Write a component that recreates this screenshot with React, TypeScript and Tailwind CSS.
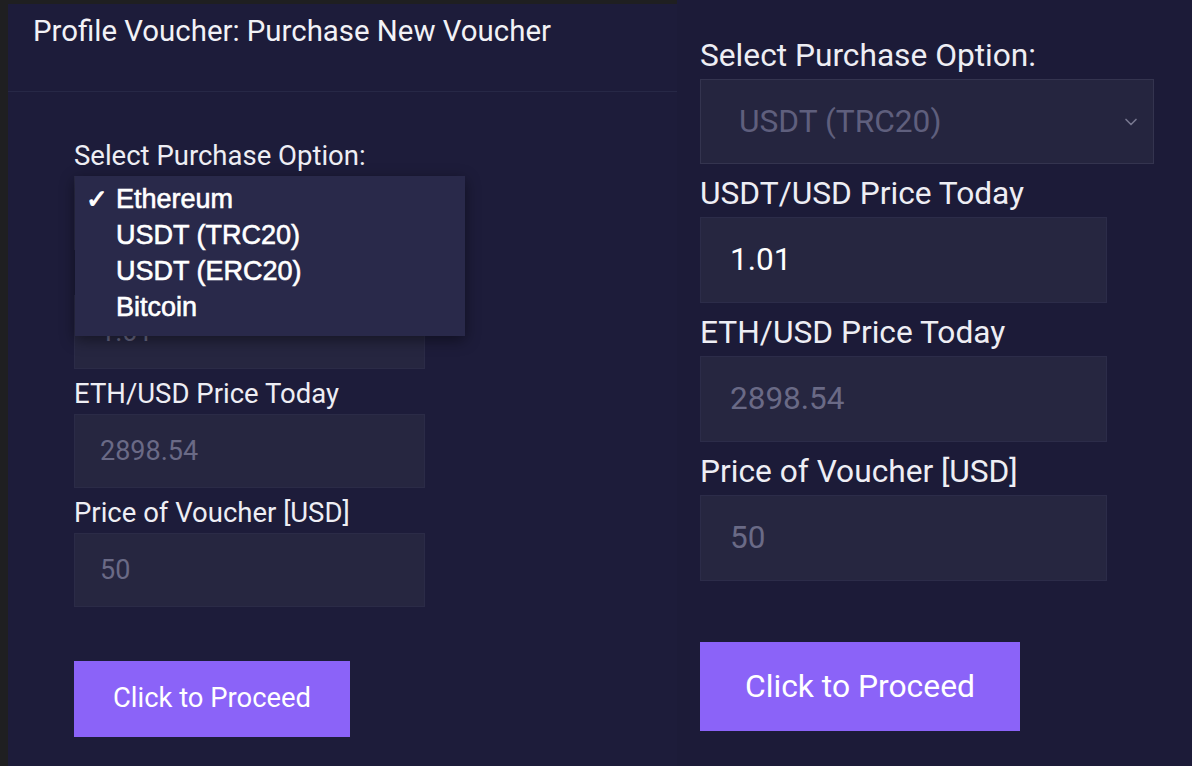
import React from "react";
import { ChevronDown } from "lucide-react";

const font = { roboto: "font-['Roboto',sans-serif]" };

const options = ["Ethereum", "USDT (TRC20)", "USDT (ERC20)", "Bitcoin"];

// left panel: the native select is open, its option list lies over the form
const OptionList = ({ selected }: { selected: string }) => (
  <ul className="absolute left-px top-0 w-[390px] pt-[5px] pb-[11px] bg-[#29294a] shadow-[0_4px_14px_rgba(0,0,0,0.45)] font-['Liberation_Sans',Arial,sans-serif] text-[27px] text-white [-webkit-text-stroke:0.6px_white] z-10">
    {options.map((o) => (
      <li key={o} className="flex items-center h-[36px] pl-[11px]">
        <span className="w-[30px] text-[26px] [-webkit-text-stroke:1px_white]">{o === selected ? "✓" : ""}</span>
        {o}
      </li>
    ))}
  </ul>
);

const LeftField = ({ label, value }: { label: string; value: string }) => (
  <div className="flex flex-col">
    <label className="mt-[10px] mb-[5px] h-[30px] leading-[30px] text-[27.5px] text-[#eeeef4]">{label}</label>
    <div className="w-[351px] h-[74px] bg-[#262640] border border-[#2b2b47] flex items-center pl-[25px] text-[27px] text-[#6a6a86]">
      {value}
    </div>
  </div>
);

const RightField = ({ label, value, light }: { label: string; value: string; light?: boolean }) => (
  <div className="flex flex-col">
    <label className="mt-[13px] mb-[6px] h-[34px] leading-[34px] text-[31.7px] text-[#eeeef4]">{label}</label>
    <div
      className={`w-[407px] h-[86px] bg-[#262640] border border-[#2c2c49] flex items-center pl-[29px] text-[31.5px] ${
        light ? "text-white" : "text-[#6a6a86]"
      }`}
    >
      {value}
    </div>
  </div>
);

const LeftPanel = () => (
  <div className={`w-[677px] h-full flex flex-col border-l-8 border-t-4 border-[#1f1f21] bg-[#1d1c3a] ${font.roboto}`}>
    {/* header */}
    <div className="h-[88px] border-b border-[#272846] pl-[25px] pt-[10px]">
      <h1 className="text-[29.4px] leading-[34px] text-[#f2f2f6]">Profile Voucher: Purchase New Voucher</h1>
    </div>

    <div className="flex flex-col pl-[66px] pt-[49px]">
      <label className="h-[30px] leading-[30px] mb-[5px] text-[27.5px] text-[#eeeef4]">Select Purchase Option:</label>
      <div className="relative">
        <div className="w-[351px] h-[74px] bg-[#262640] border border-[#2b2b47] flex items-center pl-[25px] text-[27px] text-[#6a6a86]">
          Ethereum
        </div>
        <OptionList selected="Ethereum" />
      </div>
      <LeftField label="USDT/USD Price Today" value="1.01" />
      <LeftField label="ETH/USD Price Today" value="2898.54" />
      <LeftField label="Price of Voucher [USD]" value="50" />

      <button className="mt-[54px] w-[276px] h-[76px] bg-[#8b63f8] text-white text-[27.4px]">Click to Proceed</button>
    </div>
  </div>
);

const RightPanel = () => (
  <div className={`flex-1 h-full bg-[#1c1b38] pl-[23px] pt-[39px] flex flex-col ${font.roboto}`}>
    <label className="h-[34px] leading-[34px] mb-[6px] text-[31.7px] text-[#eeeef4]">Select Purchase Option:</label>
    <div className="w-[454px] h-[85px] bg-[#25253f] border border-[#34344f] flex items-center justify-between pl-[38px] pr-[12px] text-[31.7px] text-[#5f5f7d]">
      <span>USDT (TRC20)</span>
      <ChevronDown size={20} strokeWidth={2} className="text-[#77778f]" />
    </div>
    <RightField label="USDT/USD Price Today" value="1.01" light />
    <RightField label="ETH/USD Price Today" value="2898.54" />
    <RightField label="Price of Voucher [USD]" value="50" />

    <button className="mt-[61px] w-[320px] h-[89px] bg-[#8b63f8] text-white text-[31.8px]">Click to Proceed</button>
  </div>
);

export default function App() {
  return (
    <div className="w-[1192px] h-[766px] flex overflow-hidden bg-[#1c1b38]">
      <LeftPanel />
      <RightPanel />
    </div>
  );
}
